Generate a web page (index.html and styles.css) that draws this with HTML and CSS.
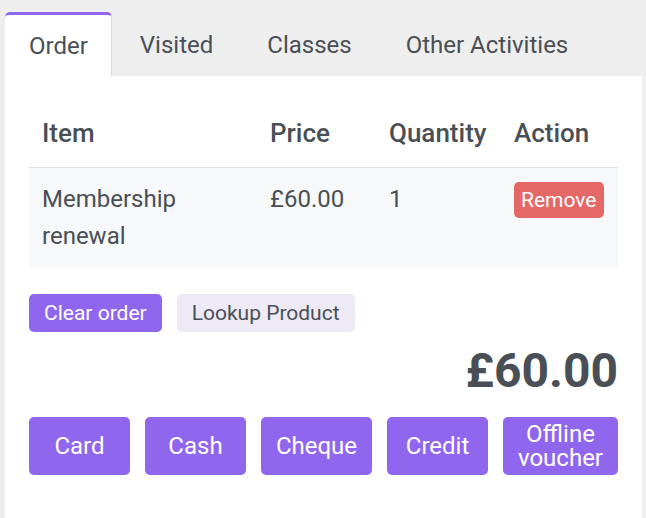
FILE: index.html
```html
<!DOCTYPE html>
<html>
<head>
<meta charset="utf-8">
<link rel="stylesheet" href="styles.css">
</head>
<body>
<div class="page">
  <nav class="tabs">
    <div class="tab active">Order</div>
    <div class="tab">Visited</div>
    <div class="tab">Classes</div>
    <div class="tab">Other Activities</div>
  </nav>
  <section class="panel">
    <table class="order-table">
      <thead>
        <tr>
          <th class="col-item">Item</th>
          <th class="col-price">Price</th>
          <th class="col-qty">Quantity</th>
          <th class="col-action">Action</th>
        </tr>
      </thead>
      <tbody>
        <tr>
          <td>Membership renewal</td>
          <td>£60.00</td>
          <td>1</td>
          <td><button class="btn-sm btn-red">Remove</button></td>
        </tr>
      </tbody>
    </table>
    <div class="order-actions">
      <button class="btn-sm btn-purple">Clear order</button>
      <button class="btn-sm btn-light">Lookup Product</button>
    </div>
    <div class="total">£60.00</div>
    <div class="pay-row">
      <button class="pay-btn">Card</button>
      <button class="pay-btn">Cash</button>
      <button class="pay-btn">Cheque</button>
      <button class="pay-btn">Credit</button>
      <button class="pay-btn">Offline<br>voucher</button>
    </div>
  </section>
</div>
</body>
</html>
```
FILE: styles.css
```css
html, body {
  margin: 0;
  padding: 0;
  height: 100%;
}
body {
  background: #eeeeee;
  font-family: Roboto, "Noto Sans", sans-serif;
  color: #4a4f56;
}
.page {
  display: flex;
  flex-direction: column;
  height: 100%;
  padding: 12px 4px 0 5px;
  box-sizing: border-box;
}
.tabs {
  display: flex;
  height: 64px;
}
.tab {
  font-size: 24px;
  padding: 2px 27px 0;
  display: flex;
  align-items: center;
  color: #4a4f56;
  box-sizing: border-box;
}
.tab:nth-child(2) {
  padding-left: 28px;
}
.tab.active {
  background: #ffffff;
  border-top: 3px solid #9166ee;
  border-right: 1px solid #dcdcdc;
  border-radius: 5px 5px 0 0;
  padding: 0 23px 0 24px;
}
.panel {
  flex: 1;
  background: #ffffff;
  padding: 26px 24px 0 24px;
}
.order-table {
  width: 100%;
  border-collapse: collapse;
}
.order-table th {
  text-align: left;
  font-size: 26px;
  font-weight: 500;
  padding: 13px 13px 15px;
  line-height: 37px;
  border-bottom: 1px solid #dde2e8;
}
.order-table td {
  font-size: 24px;
  padding: 13px 13px;
  line-height: 37px;
  vertical-align: top;
  background: #f7f8fa;
}
.col-item { width: 202px; }
.col-price { width: 93px; }
.col-qty { width: 99px; }
button {
  font-family: Roboto, "Noto Sans", sans-serif;
  border: none;
  cursor: pointer;
}
.btn-sm {
  font-size: 21px;
  line-height: 32px;
  padding: 3px 15px;
  border-radius: 5px;
}
.btn-red {
  background: #e36866;
  color: #ffffff;
  padding: 2px 7px;
}
.btn-purple {
  background: #9166ee;
  color: #ffffff;
}
.btn-light {
  background: #edeaf6;
  color: #4a4f56;
}
.order-actions {
  display: flex;
  gap: 15px;
  margin-top: 26px;
}
.total {
  text-align: right;
  font-size: 48px;
  font-weight: 700;
  line-height: 58px;
  margin-top: 10px;
}
.pay-row {
  display: flex;
  justify-content: space-between;
  margin-top: 17px;
}
.pay-btn {
  background: #9166ee;
  color: #ffffff;
  font-size: 24px;
  line-height: 24px;
  height: 58px;
  min-width: 101px;
  padding: 0 15px;
  border-radius: 5px;
}
```
